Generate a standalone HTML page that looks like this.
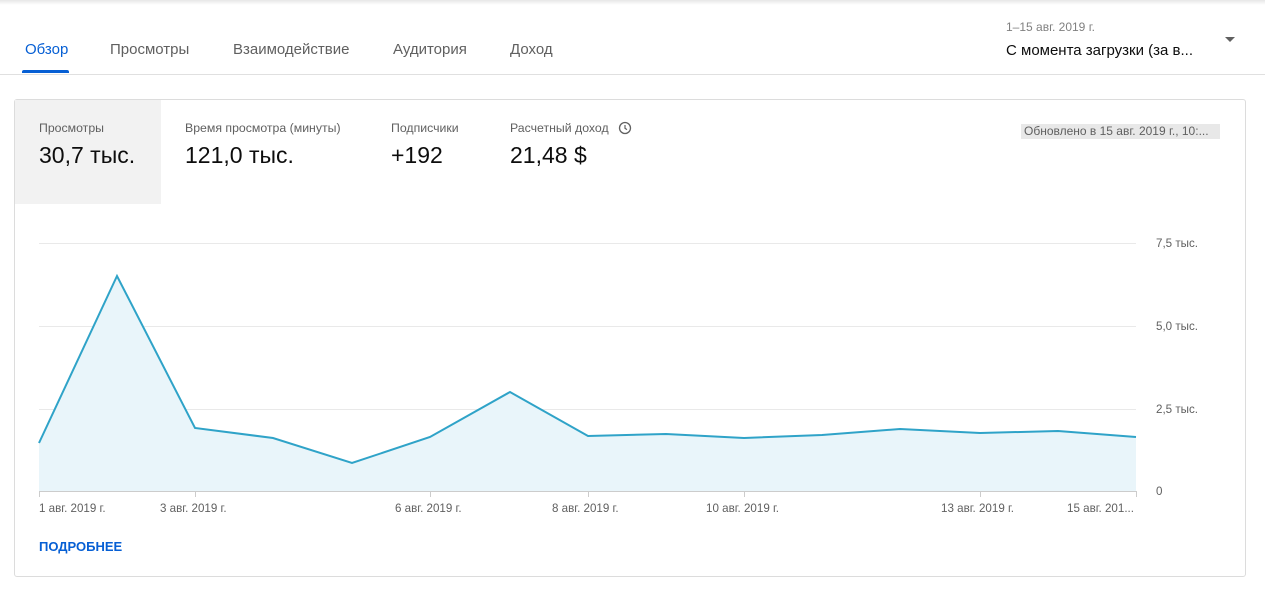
<!DOCTYPE html>
<html><head><meta charset="utf-8"><style>
*{margin:0;padding:0;box-sizing:border-box}
body{width:1265px;height:599px;background:#fff;font-family:"Liberation Sans",Roboto,sans-serif;position:relative;overflow:hidden;color:#282828}
.top{position:absolute;left:0;top:0;width:1265px;height:5px;background:linear-gradient(#e6e6e6,#fff)}
.tab{position:absolute;top:41px;font-size:15px;color:#606060}
.hr{position:absolute;left:0;top:74px;width:1265px;height:1px;background:#e0e0e0}
.card{position:absolute;left:14px;top:99px;width:1232px;height:478px;border:1px solid #dcdcdc;border-radius:3px}
.sel{position:absolute;left:15px;top:100px;width:146px;height:104px;background:#f2f2f2}
.ml{position:absolute;top:121px;font-size:12.3px;color:#606060}
.mv{position:absolute;top:142px;font-size:23px;color:#0d0d0d}
.ax{position:absolute;font-size:11.6px;color:#606060}
</style></head><body>
<div class="top"></div>
<div class="tab" style="left:25px;color:#065fd4">Обзор</div>
<div style="position:absolute;left:22px;top:70px;width:47px;height:3px;background:#065fd4;border-radius:2px 2px 0 0"></div>
<div class="tab" style="left:110px">Просмотры</div>
<div class="tab" style="left:233px">Взаимодействие</div>
<div class="tab" style="left:393px">Аудитория</div>
<div class="tab" style="left:510px">Доход</div>
<div style="position:absolute;left:1006px;top:20px;font-size:12px;color:#808080">1–15 авг. 2019 г.</div>
<div style="position:absolute;left:1006px;top:42px;font-size:15px;color:#0d0d0d">С момента загрузки (за в...</div>
<div style="position:absolute;left:1225px;top:37px;width:0;height:0;border-left:5px solid transparent;border-right:5px solid transparent;border-top:5px solid #606060"></div>
<div class="hr"></div>
<div class="card"></div>
<div class="sel"></div>
<div class="ml" style="left:39px">Просмотры</div>
<div class="mv" style="left:39px">30,7 тыс.</div>
<div class="ml" style="left:185px">Время просмотра (минуты)</div>
<div class="mv" style="left:185px">121,0 тыс.</div>
<div class="ml" style="left:391px">Подписчики</div>
<div class="mv" style="left:391px">+192</div>
<div class="ml" style="left:510px">Расчетный доход</div>
<svg style="position:absolute;left:618px;top:121px" width="14" height="14" viewBox="0 0 14 14"><circle cx="7" cy="7" r="5.5" fill="none" stroke="#606060" stroke-width="1.3"/><path d="M7 4v3.3l2 1.3" fill="none" stroke="#606060" stroke-width="1.2"/></svg>
<div class="mv" style="left:510px">21,48 $</div>
<div style="position:absolute;left:1021px;top:124px;width:199px;height:15px;background:#e8e8e8;font-size:12px;color:#606060;padding-left:3px;line-height:15px;white-space:nowrap;overflow:hidden">Обновлено в 15 авг. 2019 г., 10:...</div>
<svg style="position:absolute;left:0;top:0" width="1265" height="599">
<g stroke="#e9e9e9" stroke-width="1"><line x1="39" y1="243.5" x2="1136" y2="243.5"/><line x1="39" y1="326.5" x2="1136" y2="326.5"/><line x1="39" y1="409.5" x2="1136" y2="409.5"/></g>
<path d="M39,443 L117,276 L195,428 L273,438 L352,463 L430,437 L510,392 L588,436 L666,434 L744,438 L822,435 L900,429 L980,433 L1058,431 L1136,437 L1136,491 L39,491Z" fill="#e9f5fa"/>
<polyline points="39,443 117,276 195,428 273,438 352,463 430,437 510,392 588,436 666,434 744,438 822,435 900,429 980,433 1058,431 1136,437" fill="none" stroke="#2fa3c8" stroke-width="2"/>
<line x1="39" y1="491.5" x2="1136" y2="491.5" stroke="#ccc"/>
<g stroke="#ccc"><line x1="39.5" y1="491" x2="39.5" y2="497"/><line x1="195.5" y1="491" x2="195.5" y2="497"/><line x1="430.5" y1="491" x2="430.5" y2="497"/><line x1="588.5" y1="491" x2="588.5" y2="497"/><line x1="744.5" y1="491" x2="744.5" y2="497"/><line x1="980.5" y1="491" x2="980.5" y2="497"/><line x1="1136.5" y1="491" x2="1136.5" y2="497"/></g>
</svg>
<div class="ax" style="left:1156px;top:237px">7,5 тыс.</div>
<div class="ax" style="left:1156px;top:320px">5,0 тыс.</div>
<div class="ax" style="left:1156px;top:403px">2,5 тыс.</div>
<div class="ax" style="left:1156px;top:485px">0</div>
<div class="ax" style="left:39px;top:502px">1 авг. 2019 г.</div>
<div class="ax" style="left:160px;top:502px">3 авг. 2019 г.</div>
<div class="ax" style="left:395px;top:502px">6 авг. 2019 г.</div>
<div class="ax" style="left:552px;top:502px">8 авг. 2019 г.</div>
<div class="ax" style="left:706px;top:502px">10 авг. 2019 г.</div>
<div class="ax" style="left:941px;top:502px">13 авг. 2019 г.</div>
<div class="ax" style="left:1067px;top:502px">15 авг. 201...</div>
<div style="position:absolute;left:39px;top:539px;font-size:13px;font-weight:bold;color:#065fd4">ПОДРОБНЕЕ</div>
</body></html>
